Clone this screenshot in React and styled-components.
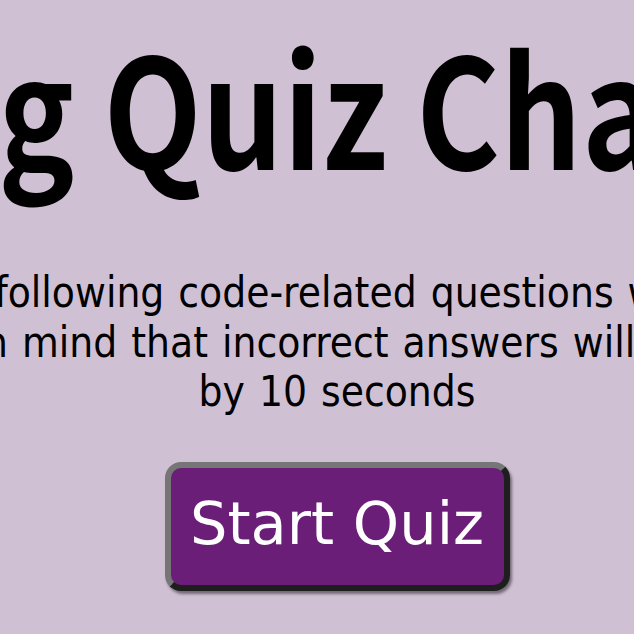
import React from 'react';
import styled, { createGlobalStyle } from 'styled-components';

const GlobalStyle = createGlobalStyle`
  html, body {
    margin: 0;
    padding: 0;
    background: #d0c0d4;
  }
`;

const Page = styled.main`
  display: flex;
  flex-direction: column;
  align-items: center;
  min-height: 634px;
  padding: 27px 0 0 40px;
  box-sizing: border-box;
  overflow: hidden;
  color: #000;
`;

const Title = styled.h1`
  margin: 0;
  font-family: "Noto Sans CJK SC", "Open Sans", sans-serif;
  font-weight: 700;
  font-size: 153px;
  line-height: 1;
  white-space: nowrap;
  transform: scaleX(0.835);
`;

const Intro = styled.div`
  display: flex;
  flex-direction: column;
  align-items: center;
  margin-top: 88px;
  font-family: "DejaVu Sans Condensed", "DejaVu Sans", sans-serif;
  font-stretch: condensed;
  font-size: 42px;
  line-height: 49.5px;
  word-spacing: 2px;
`;

const Line = styled.span`
  white-space: nowrap;
`;

const StartButton = styled.button`
  display: flex;
  align-items: center;
  justify-content: center;
  margin-top: 45px;
  width: 345px;
  height: 129px;
  padding: 0 0 5px;
  box-sizing: border-box;
  border: 6px solid;
  border-color: #767676 #1e1e1e #1e1e1e #767676;
  border-radius: 16px;
  background: #6b1e78;
  box-shadow: 2px 3px 3px rgba(0, 0, 0, 0.45);
  color: #fff;
  font-family: "DejaVu Sans", sans-serif;
  font-size: 59px;
  line-height: 1;
  cursor: pointer;
`;

const lines = [
  'Try to answer the following code-related questions within the time limit.',
  'Keep in mind that incorrect answers will penalize',
  'by 10 seconds',
];

export default function App() {
  return (
    <>
      <GlobalStyle />
      <Page>
        <Title>Coding Quiz Challenge</Title>
        <Intro>
          {lines.map(text => (
            <Line key={text}>{text}</Line>
          ))}
        </Intro>
        <StartButton>Start Quiz</StartButton>
      </Page>
    </>
  );
}
